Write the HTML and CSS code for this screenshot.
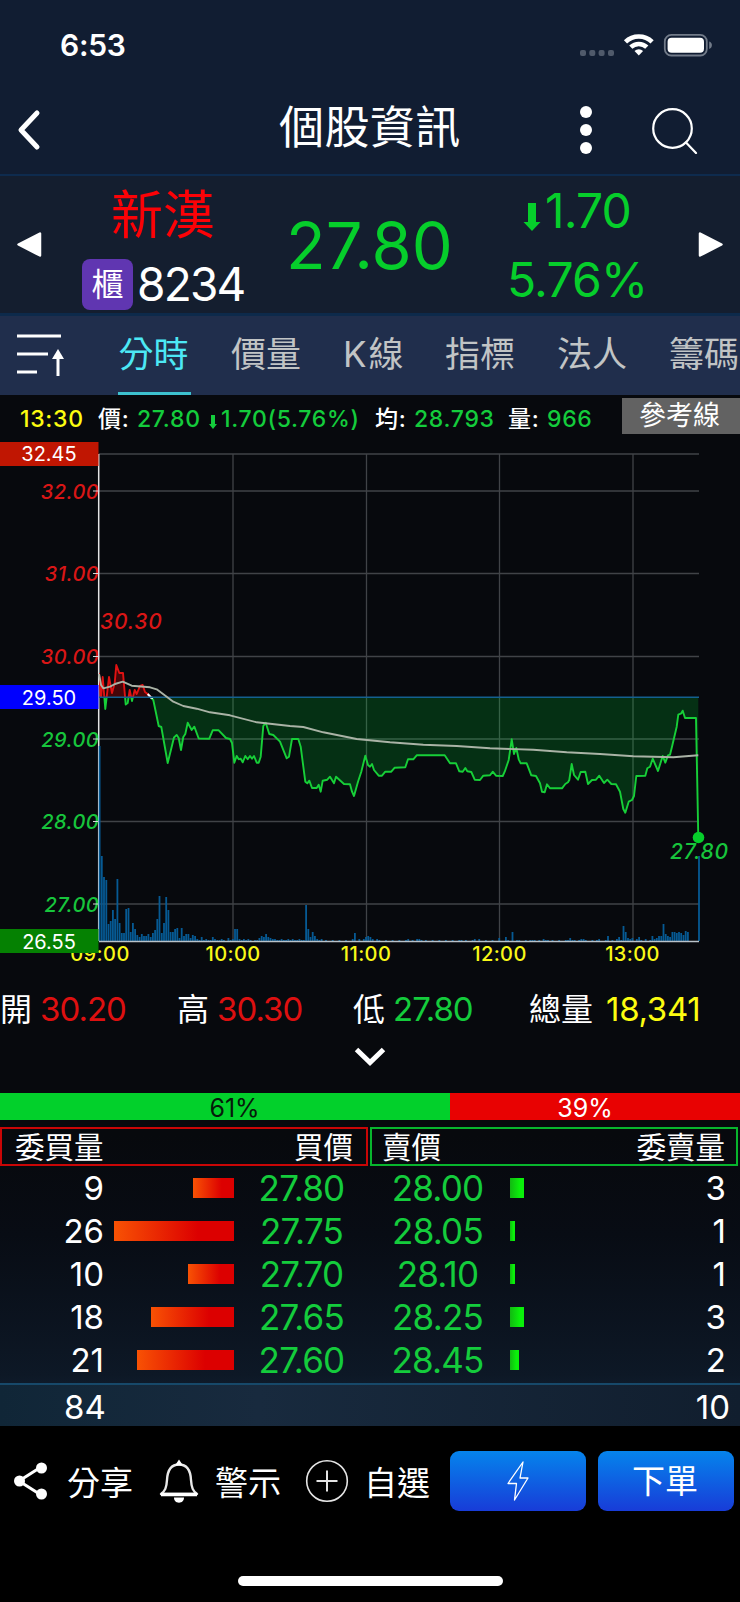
FILE: index.html
```html
<!DOCTYPE html>
<html lang="zh-Hant">
<head>
  <meta charset="UTF-8" />
  <meta name="viewport" content="width=device-width, initial-scale=1.0"/>
  <title>個股資訊</title>
  <link rel="stylesheet" href="styles.css">
</head>
<body>
  <header class="top">
    <div class="status">
      <span class="clock">6:53</span>
      <svg class="status-icons" width="134" height="24" viewBox="0 0 134 24">
        <g fill="#505a6b">
          <rect x="0" y="17" width="6" height="6" rx="2"/>
          <rect x="9.3" y="17" width="6" height="6" rx="2"/>
          <rect x="18.6" y="17" width="6" height="6" rx="2"/>
          <rect x="28" y="17" width="6" height="6" rx="2"/>
        </g>
        <g fill="none" stroke="#fff" stroke-width="4.6">
          <path d="M45.5 8.8a19.2 19.2 0 0 1 26.6 0"/>
          <path d="M50.8 14.2a11.6 11.6 0 0 1 16 0"/>
        </g>
        <path d="M58.8 22.5l-4.3-4.5a6.2 6.2 0 0 1 8.6 0z" fill="#fff"/>
        <rect x="84.8" y="1.9" width="42" height="20.6" rx="6.5" fill="none" stroke="#727b89" stroke-width="1.8"/>
        <rect x="87.6" y="4.7" width="36.4" height="15" rx="4" fill="#fff"/>
        <path d="M129.2 8.5c3.6 1.2 3.6 6.2 0 7.4z" fill="#727b89"/>
      </svg>
    </div>
    <div class="nav">
      <svg width="26" height="42" viewBox="0 0 26 42"><path d="M21 4L5 21l16 17" fill="none" stroke="#fff" stroke-width="5" stroke-linecap="round" stroke-linejoin="round"/></svg>
      <h1>個股資訊</h1>
      <svg class="more" width="14" height="50" viewBox="0 0 14 50" fill="#fff"><circle cx="7" cy="7" r="6"/><circle cx="7" cy="25" r="6"/><circle cx="7" cy="43" r="6"/></svg>
      <svg class="search" width="48" height="48" viewBox="0 0 48 48" fill="none" stroke="#fff" stroke-width="2.2" stroke-linecap="round"><circle cx="21.5" cy="22.5" r="19.3"/><path d="M35 36.5l10 10.5"/></svg>
    </div>
  </header>

  <section class="quote">
    <svg class="prev" width="26" height="27" viewBox="0 0 26 27"><path d="M24 2.5v22L2.5 13.5z" fill="#fff" stroke="#fff" stroke-width="2.5" stroke-linejoin="round"/></svg>
    <div class="stock">
      <div class="name">新漢</div>
      <div class="code"><span class="market">櫃</span><span>8234</span></div>
    </div>
    <div class="price">27.80</div>
    <div class="change">
      <div class="diff"><svg width="18" height="28" viewBox="0 0 18 28"><path d="M5 0h8v19h4.5L9 28 .5 19H5z" fill="#06ce2b"/></svg><span>1.70</span></div>
      <div>5.76%</div>
    </div>
    <svg class="next" width="26" height="27" viewBox="0 0 26 27"><path d="M2 2.5v22l21.5-11z" fill="#fff" stroke="#fff" stroke-width="2.5" stroke-linejoin="round"/></svg>
  </section>

  <nav class="tabs">
    <svg width="50" height="44" viewBox="0 0 50 44" stroke="#fff" stroke-width="3" fill="none"><path d="M0 2h44M0 20h31M0 38h20M41 42V22"/><path d="M35 25l6-10 6 10z" fill="#fff" stroke="none"/></svg>
    <a class="tab active">分時</a>
    <a class="tab">價量</a>
    <a class="tab k">K線</a>
    <a class="tab">指標</a>
    <a class="tab">法人</a>
    <a class="tab">籌碼</a>
  </nav>

  <main>
    <div class="info">
      <span class="yellow t">13:30</span>
      <span class="l">價:</span>
      <span class="green p">27.80</span>
      <span class="green d"><svg width="8" height="14" viewBox="0 0 8 14"><path d="M2 0h4v9h2l-4 5-4-5h2z" fill="#14cc3c"/></svg>1.70(5.76%)</span>
      <span class="l">均:</span>
      <span class="green avg">28.793</span>
      <span class="l">量:</span>
      <span class="green">966</span>
      <button>參考線</button>
    </div>

    <svg class="chart" id="chart" width="740" height="536" viewBox="0 434 740 536">
      <defs>
        <clipPath id="up"><rect x="99" y="440" width="601" height="257"/></clipPath>
        <clipPath id="down"><rect x="99" y="697" width="605" height="250"/></clipPath>
      </defs>
      <path class="grid" d="M99 454H699M99 491H699M99 573.5H699M99 656.5H699M99 739H699M99 821.5H699M99 904H699M233 454V941M366.5 454V941M499.5 454V941M633 454V941"/>
      <path d="M98.7 454V941" stroke="#e4e4e4" stroke-width="1.5"/>
      <g id="volume" fill="#065a94"></g>
      <path d="M99 941.5H699" stroke="#b9c2c9" stroke-width="1.5"/>
      <g id="price"></g>
      <path d="M99 697.3H699" stroke="#14608f" stroke-width="1.4"/>
      <path id="average" fill="none" stroke="#aab3a6" stroke-width="1.9" stroke-linejoin="round"/>
      <circle cx="698.5" cy="837.5" r="5.8" fill="#06ce2b"/>
      <g class="scale">
        <text x="99" y="498.5" class="up">32.00</text>
        <text x="99" y="581" class="up">31.00</text>
        <text x="99" y="664" class="up">30.00</text>
        <text x="99" y="746.5" class="dn">29.00</text>
        <text x="99" y="829" class="dn">28.00</text>
        <text x="99" y="911.5" class="dn">27.00</text>
      </g>
      <path d="M93 491h5M93 573.5h5M93 656.5h5M93 739h5M93 821.5h5M93 904h5" stroke="#d8d8d8" stroke-width="1.2"/>
      <text x="100" y="628.5" class="mark up">30.30</text>
      <text x="670" y="859" class="mark dn">27.80</text>
      <g class="hours">
        <text x="100" y="961">09:00</text>
        <text x="233" y="961">10:00</text>
        <text x="366" y="961">11:00</text>
        <text x="499.5" y="961">12:00</text>
        <text x="632.5" y="961">13:00</text>
      </g>
      <g class="limits">
        <rect x="0" y="442" width="98.5" height="24" fill="#c01602"/><text x="49" y="461.3">32.45</text>
        <rect x="0" y="685" width="98.5" height="24" fill="#0000fe"/><text x="49" y="704.5">29.50</text>
        <rect x="0" y="929" width="98.5" height="24" fill="#058102"/><text x="49" y="948.5">26.55</text>
      </g>
    </svg>

    <div class="ohlc">
      <div>開<b class="red">30.20</b></div>
      <div>高<b class="red">30.30</b></div>
      <div>低<b class="green">27.80</b></div>
      <div class="total">總量<b class="yellow">18,341</b></div>
    </div>
    <div class="expand"><svg width="32" height="20" viewBox="0 0 32 20"><path d="M2.5 2.5L16 15.5 29.5 2.5" fill="none" stroke="#fff" stroke-width="5"/></svg></div>

    <div class="ratio"><div class="buy">61%</div><div class="sell">39%</div></div>

    <div class="heads">
      <div class="head bid"><span>委買量</span><span>買價</span></div>
      <div class="head ask"><span>賣價</span><span>委賣量</span></div>
    </div>
    <div id="book"></div>
    <div class="sum"><span>84</span><span>10</span></div>
  </main>

  <footer>
    <div class="action share">
      <svg width="36" height="40" viewBox="0 0 36 40"><path d="M29 6L7 20l22 14" fill="none" stroke="#fff" stroke-width="3"/><circle cx="29.5" cy="7" r="5.5" fill="#fff"/><circle cx="7.5" cy="20" r="5.5" fill="#fff"/><circle cx="29.5" cy="33" r="5.5" fill="#fff"/></svg>
      <span>分享</span>
    </div>
    <div class="action alert">
      <svg width="40" height="44" viewBox="0 0 40 44"><path d="M2 35c4-3 5.5-6 6-14C8.5 10.5 12.5 5.5 20 5.5S31.5 10.5 32 21c.5 8 2 11 6 14z" fill="none" stroke="#e8e8e8" stroke-width="2.4" stroke-linejoin="round"/><path d="M2 35.5h36" stroke="#fff" stroke-width="3.4"/><path d="M20 .5l4 6h-8zM15 38.5h10c0 3.3-2 5.2-5 5.2s-5-1.9-5-5.2z" fill="#fff"/></svg>
      <span>警示</span>
    </div>
    <div class="action fav">
      <svg width="44" height="44" viewBox="0 0 44 44" fill="none" stroke="#e4e4e4"><circle cx="22" cy="22" r="20.3" stroke-width="1.6"/><path d="M22 11.5v21M11.5 22h21" stroke-width="2"/></svg>
      <span>自選</span>
    </div>
    <button class="order"><svg width="24" height="42" viewBox="0 0 24 42"><path d="M17 2L2 23.5h8.5L8.5 40 22 18h-8z" fill="none" stroke="#fff" stroke-width="1.3" stroke-linejoin="round"/></svg></button>
    <button class="order">下單</button>
    <div class="home"></div>
  </footer>

  <script src="chart.js"></script>
</body>
</html>
```
FILE: styles.css
```css
* {
  margin: 0;
  padding: 0;
  box-sizing: border-box;
}

body {
  width: 740px;
  height: 1602px;
  overflow: hidden;
  background: #000;
  color: #fff;
  font-family: Inter, "Noto Sans CJK TC", sans-serif;
  font-weight: 370;
}

svg {
  display: block;
  flex: none;
}

button {
  border: none;
  color: #fff;
  font-family: inherit;
  font-weight: 370;
}

.red { color: #dd1010; }
.green { color: #14cc3c; }
.yellow { color: #fcfc10; }

/* top bar */
.top {
  height: 176px;
  background: #111d32;
  border-bottom: 2px solid #0e2b4e;
}

.status {
  height: 90px;
  padding: 0 26px 0 60px;
  display: flex;
  align-items: center;
  justify-content: space-between;
}

.clock {
  font-size: 30px;
  font-weight: 600;
  letter-spacing: -0.3px;
}

.nav {
  height: 79px;
  padding: 0 41px 0 16px;
  display: flex;
  align-items: center;
}

.nav h1 {
  margin: -4px 0 0 237px;
  width: 182px;
  font-size: 45px;
  line-height: 60px;
  font-weight: 370;
  letter-spacing: 0.4px;
  white-space: nowrap;
}

.more { margin-left: 118px; }
.search { margin-left: 58px; }

/* quote */
.quote {
  height: 140px;
  padding: 0 16px;
  display: flex;
  background: #141e2f;
  border-bottom: 3px solid #0d2a4b;
}

.prev,
.next {
  margin-top: 55px;
}

.next { margin-left: auto; }

.stock {
  width: 166px;
  margin-left: 40px;
}

.name {
  height: 77px;
  padding-left: 29px;
  font-size: 52px;
  line-height: 80px;
  color: #fb0207;
}

.code {
  display: flex;
  align-items: center;
  height: 62px;
  font-size: 46px;
  letter-spacing: -1.8px;
}

.market {
  width: 51px;
  height: 51px;
  margin-right: 4px;
  border-radius: 8px;
  background: #6036b1;
  font-size: 32px;
  line-height: 52px;
  letter-spacing: 0;
  text-align: center;
}

.price {
  width: 170px;
  margin-left: 38px;
  font-size: 65px;
  line-height: 140px;
  font-weight: 400;
  color: #06ce2b;
}

.change {
  width: 140px;
  margin-left: 51px;
  font-size: 48px;
  line-height: 69px;
  letter-spacing: -0.8px;
  text-align: center;
  white-space: nowrap;
  color: #06ce2b;
}

.diff {
  display: flex;
  justify-content: center;
  align-items: center;
}

.diff svg { margin: 12px 4px 0 0; }

/* tabs */
.tabs {
  height: 79px;
  padding-left: 17px;
  display: flex;
  align-items: center;
  gap: 40px;
  overflow: hidden;
  background: #202e4c;
}

.tabs svg { margin-right: 11px; }

.tab {
  flex: none;
  width: 72px;
  height: 79px;
  font-size: 35px;
  line-height: 77px;
  text-indent: -2px;
  text-align: center;
  white-space: nowrap;
  color: #c1c4c5;
}

.tab.k {
  width: 62px;
  letter-spacing: 2px;
  text-indent: 0;
}

.tab.active {
  width: 73px;
  color: #4ce8f5;
  border-bottom: 3px solid #3dc1cf;
}

/* chart block */
main {
  height: 1031px;
  background: linear-gradient(#07090d 0, #07090d 740px, #080c14 840px, #0d1826 980px, #14253a 1031px);
}

.info {
  height: 39px;
  padding-left: 20px;
  display: flex;
  align-items: center;
  font-size: 23px;
  line-height: 39px;
  font-weight: 550;
  letter-spacing: 0.7px;
  white-space: nowrap;
}

.info span {
  flex: none;
  margin-top: 9px;
}

.info .t { width: 78px; }
.info .l { width: 39px; font-weight: 500; }
.info .p { width: 72px; }
.info .avg { width: 94px; }

.info .d {
  width: 166px;
  display: flex;
  align-items: center;
}

.info .d svg { margin: 5px 4px 0 0; }

.info button {
  width: 118px;
  height: 36px;
  margin: 3px 0 0 auto;
  padding-right: 3px;
  background: #626262;
  font-size: 27px;
  line-height: 36px;
}

.chart {
  font-size: 20px;
}

.grid {
  stroke: #404347;
  stroke-width: 1.3;
  fill: none;
}

.up { fill: #d91616; }
.dn { fill: #17c53c; }

.scale text {
  text-anchor: end;
  font-style: italic;
  font-weight: 550;
  letter-spacing: 0.4px;
}

.mark {
  font-size: 21px;
  font-style: italic;
  font-weight: 550;
  letter-spacing: 0.8px;
}

.hours text {
  text-anchor: middle;
  fill: #f8f818;
  font-weight: 550;
  letter-spacing: 0.4px;
}

.limits text {
  text-anchor: middle;
  fill: #fff;
  font-weight: 400;
}

.ohlc {
  height: 76px;
  display: grid;
  grid-template-columns: 177px 176px 176px 211px;
  font-size: 32px;
  line-height: 78px;
}

.ohlc div {
  white-space: nowrap;
}

.ohlc b {
  margin-left: 8px;
  font-size: 33px;
  font-weight: 370;
  letter-spacing: -1px;
}

.ohlc .total b {
  margin-left: 13px;
  letter-spacing: -0.3px;
}

.expand {
  height: 47px;
  padding-top: 1px;
  display: flex;
  justify-content: center;
}

.ratio {
  height: 27px;
  display: flex;
  font-size: 25px;
  line-height: 31px;
  text-align: center;
}

.buy {
  width: 450px;
  padding-left: 19px;
  background: #02d02b;
  color: #061b0a;
}

.sell {
  flex: 1;
  padding-right: 20px;
  background: #e80202;
}

.heads {
  display: grid;
  grid-template-columns: 368px 368px;
  gap: 2px;
  padding-top: 7px;
}

.head {
  height: 39px;
  padding: 0 13px;
  display: flex;
  justify-content: space-between;
  border: 2px solid;
  font-size: 29.5px;
  line-height: 36px;
}

.ask { padding: 0 11px 0 10px; }
.bid { border-color: #c90606; }
.ask { border-color: #08b52d; }
.head span { color: #fff; }

.row {
  height: 43px;
  display: grid;
  grid-template-columns: 104px 130px 135px 137px 4px 120px 96px;
  align-items: center;
  font-size: 33px;
}

.row .qty,
.row .ask-qty {
  text-align: right;
}

.row .offer {
  font-size: 35px;
  text-align: center;
  letter-spacing: -0.8px;
  color: #14cc3c;
}

.bar {
  height: 20px;
}

.row .bid-bar {
  justify-self: end;
  background: linear-gradient(90deg, #f85204, #dc0000 70%);
}

.row .ask-bar {
  grid-column: 6;
  background: linear-gradient(90deg, #12b812, #0af00a 70%);
}

.sum {
  height: 43px;
  margin-top: 2px;
  padding: 0 10px 0 64px;
  display: flex;
  justify-content: space-between;
  border-top: 2px solid #17496a;
  background: linear-gradient(90deg, #102637, #182a3e 35%, #111e2e);
  font-size: 33px;
  line-height: 44px;
}

/* bottom bar */
footer {
  height: 176px;
  padding: 25px 6px 0 12px;
  display: flex;
  flex-wrap: wrap;
  align-content: flex-start;
}

.action {
  height: 60px;
  display: flex;
  align-items: center;
  font-size: 33px;
  white-space: nowrap;
}

.share { width: 147px; }
.alert { width: 146px; }
.fav { width: 145px; }
.share span { margin-left: 19px; }
.alert span { margin-left: 16px; }
.fav span { margin-left: 15px; }

.order {
  width: 136px;
  height: 60px;
  margin-right: 12px;
  border-radius: 9px;
  background: linear-gradient(#0584ec, #183cd8);
  font-size: 33px;
  line-height: 56px;
  display: flex;
  align-items: center;
  justify-content: center;
}

.order + .order {
  margin-right: 0;
  padding-right: 2px;
}

.home {
  width: 265px;
  height: 10px;
  margin: 65px 0 0 226px;
  border-radius: 5px;
  background: #fff;
}
```
FILE: chart.js
```js
// intraday prices as x,y on the chart canvas
const price = [
  [99,673],[101,697],[102.7,677],[105.3,709],[109,677],[112,693],[114.7,683],[116.3,665],[119.3,673],[123,673],[125.7,704.5],
  [127.7,703],[129.7,690],[132,701],[134.7,690],[136.7,694],[140,686],[142.7,685],[145,692],[147.7,694],[151,697.5],
  [153.3,700],[158.7,726],[161.3,727],[167.7,763],[174,737.5],[176.7,735],[178.7,738],[181,750],[183.3,737],[185.3,734],
  [187.7,722.7],[191.7,730],[194.3,726.7],[198.7,738.5],[209.3,738.7],[212.7,730.3],[218.7,730.3],[226,738],[230,739],
  [232,743],[234.3,762.7],[236.7,756],[238.7,759.3],[240.7,758.7],[242.7,762.3],[245.3,756],[247.7,759.3],[250,756],
  [252,758.7],[254,756],[256.7,762.7],[258.7,762.7],[260.7,756.7],[263.3,726],[265.7,722.7],[269.3,734],[273.3,735],
  [280,741.7],[286.7,758.3],[289,756.7],[292,739],[298.3,739],[300.7,746.7],[305.3,781.7],[307.3,783.3],[309.3,780.7],
  [312,788],[316.7,788],[318.7,784.7],[320.7,791.7],[322.7,780.7],[327.3,779.7],[330,776.7],[334,783.3],[336,776.7],
  [340.7,781],[344,784],[350,784.3],[352,791.7],[354,796],[358,781.7],[361.3,771.7],[365.3,755.7],[368,765],[370,766.7],
  [372,764],[374,770],[378.7,775.7],[382,775.7],[385.3,771.7],[391.3,771.7],[394.7,767.7],[405.3,767.3],[408,759.3],
  [413.3,759.3],[416.7,755.3],[444.7,755.3],[450,763.3],[456,763.3],[459.3,771.3],[462.7,771.7],[465.3,768],
  [467.3,771.3],[471.3,772],[474.7,779.7],[480,780],[483.3,775.7],[490,775.3],[492.7,771.7],[496,775.7],[502.7,776],
  [504.7,771.7],[508.7,760],[511.7,739.3],[514,754],[516.3,748],[518.7,759.3],[520.7,763.3],[526.7,763.3],[531.3,775.3],
  [536,776],[540,783.3],[542,791.7],[544.7,792.3],[547,784.3],[550,788.3],[562,788.3],[565.3,784],[568,782.3],[569.3,780],
  [571.7,764],[574,775],[578,779.7],[580.7,772],[585.3,771.7],[588,784],[592,780],[596,779.7],[599.3,775.7],[604,783],
  [607.3,779.7],[611.3,784],[616,784.3],[620,791.7],[623.3,809],[625.3,812.7],[628.7,801.7],[632,800],[634,796],
  [636.3,776],[645.3,775.7],[647.3,768.3],[650,766.7],[652.7,758.7],[658,771],[662.7,756],[665.3,762.7],[668,755.3],
  [670,754.7],[672,746.7],[676.7,726.7],[678.3,714.7],[681.3,713.3],[682.7,710.7],[685,718],[696,718],[698.3,837.5]
];

const average = [
  [99,674],[101,685],[103.3,688.3],[110,686.7],[115,684],[122.7,681.7],[131.7,685.7],[150,687.3],[156.7,689.3],[166.7,696.7],
  [173.3,701.7],[183.3,706],[196.7,708.7],[210,712.3],[230,715.3],[256.7,722.3],[270,723.7],[290,726],[303.3,727],
  [323.3,732.3],[356.7,739],[390,742.3],[423.3,744.7],[456.7,746],[490,748.3],[533.3,749.7],[566.7,752.3],
  [600,754],[633.3,756.3],[673.3,757.3],[698.3,755.3]
];

// bar heights, one per minute
const volume = [195,85,64,61,17,20,31,22,62,18,8,8,32,33,9,18,12,6,4,7,5,5,7,4,8,11,22,45,8,18,44,31,9,9,12,13,3,13,5,7,7,3,6,5,2,1,4,1,2,1,1,4,2,1,1,2,1,0,3,1,2,12,12,2,1,2,1,2,1,0,1,1,3,5,4,7,4,3,2,2,1,1,2,1,1,2,1,2,1,1,2,1,1];
const later = {93:36,94:12,95:4,96:9,97:5,98:2,99:1,100:2,114:2,115:8,117:2,119:2,120:4,121:5,122:4,123:2,125:2,139:2,143:2,144:2,145:1,163:1,169:2,171:2,180:3,183:4,184:1,186:9,188:1,194:1,196:1,198:1,200:2,202:1,211:1,212:3,214:1,217:2,218:2,224:1,225:2,229:5,231:1,233:2,234:4,235:1,236:15,237:9,238:3,239:2,240:3,242:2,243:4,244:1,246:2,248:1,249:5,250:2,251:3,252:5,253:5,254:17,255:7,256:5,257:4,258:9,259:9,260:8,261:9,262:8,263:6,264:10,265:9,270:85};
for (let i = 93; i <= 270; i++) volume[i] = later[i] || (i < 266 && i % 3 === 0 ? 1 : 0);

const toPath = pts => "M" + pts.map(p => p.join(" ")).join("L");
const line = toPath(price);
const area = line + "V697H99Z";

document.getElementById("price").innerHTML = `
  <path d="${area}" fill="#f00" fill-opacity=".25" clip-path="url(#up)"/>
  <path d="${area}" fill="#00ff3c" fill-opacity=".16" clip-path="url(#down)"/>
  <path d="${line}" fill="none" stroke="#e01212" stroke-width="1.9" stroke-linejoin="round" clip-path="url(#up)"/>
  <path d="${line}" fill="none" stroke="#17cf38" stroke-width="1.9" stroke-linejoin="round" clip-path="url(#down)"/>
  <path d="M147.7 694L151 697.5L153 698" fill="none" stroke="#fff" stroke-width="2"/>`;

document.getElementById("average").setAttribute("d", toPath(average));

document.getElementById("volume").innerHTML = volume
  .map((v, i) => `<rect x="${(98.7 + i * 2.22).toFixed(1)}" y="${941 - v}" width="1.8" height="${v}"/>`)
  .join("");

// five best bids and asks
const book = [
  [9, "27.80", "28.00", 3],
  [26, "27.75", "28.05", 1],
  [10, "27.70", "28.10", 1],
  [18, "27.65", "28.25", 3],
  [21, "27.60", "28.45", 2]
];

document.getElementById("book").innerHTML = book.map(([bq, bp, ap, aq]) => `
  <div class="row">
    <span class="qty">${bq}</span>
    <div class="bar bid-bar" style="width:${bq * 4.6}px"></div>
    <span class="offer">${bp}</span>
    <span class="offer">${ap}</span>
    <div class="bar ask-bar" style="width:${aq * 4.5}px"></div>
    <span class="ask-qty">${aq}</span>
  </div>`).join("");
```
